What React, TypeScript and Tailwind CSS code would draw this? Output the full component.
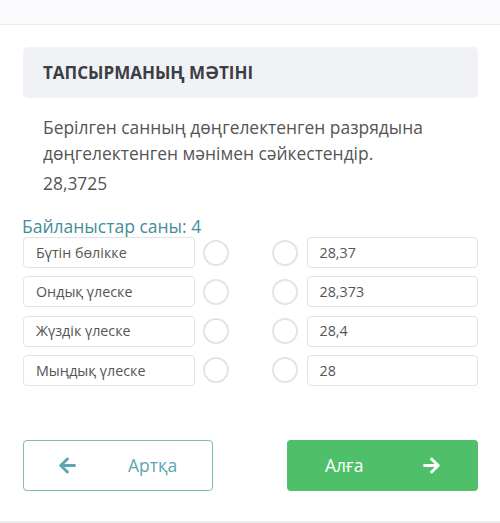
import React from "react";
import { FaArrowLeft, FaArrowRight } from "react-icons/fa";

const left = ["Бүтін бөлікке", "Ондық үлеске", "Жүздік үлеске", "Мыңдық үлеске"];
const right = ["28,37", "28,373", "28,4", "28"];

function Circle() {
  return <div className="w-[26px] h-[26px] rounded-full border-2 border-[#e4e4e4] bg-white shrink-0" />;
}

export default function App() {
  return (
    <div className="w-[500px] h-[523px] bg-white overflow-hidden relative" style={{ fontFamily: '"Open Sans", sans-serif' }}>
      <div className="h-[25px] bg-[#fafafc] border-b border-[#e9e9ec]" />
      <div className="px-[22px] pl-[23px]">
        <div className="mt-[22px] h-[51px] rounded-[5px] bg-[#f1f2f6] flex items-center pl-[20px]">
          <span className="text-[17px] font-bold text-[#3b3e45]">ТАПСЫРМАНЫҢ МӘТІНІ</span>
        </div>
        <div className="pl-[20px] mt-[16px] text-[17.4px] leading-[26px] text-[#555]">
          <p>Берілген санның дөңгелектенген разрядына дөңгелектенген мәнімен сәйкестендір.</p>
          <p className="mt-[4px]">28,3725</p>
        </div>
        <div className="-ml-[1px] mt-[18px] text-[17.5px] leading-[24px] text-[#3f8e9c]">Байланыстар саны: 4</div>
        <div className="mt-[-1px] flex flex-col gap-[8.3px]">
          {left.map((l, i) => (
            <div key={i} className="flex items-center h-[31px]">
              <div className="w-[172px] h-[31px] border border-[#e3e3e3] rounded-[4px] flex items-center pl-[12px] text-[14.3px] text-[#555]">{l}</div>
              <div className="ml-[8px]"><Circle /></div>
              <div className="ml-[43px]"><Circle /></div>
              <div className="ml-[9px] w-[172px] h-[31px] border border-[#e3e3e3] rounded-[4px] flex items-center pl-[12px] text-[14.3px] text-[#555]">{right[i]}</div>
            </div>
          ))}
        </div>
        <div className="mt-[54px] flex justify-between">
          <div className="w-[190px] h-[51px] border border-[#7fb8c0] rounded-[4px] flex items-center text-[#5aa7b2]">
            <FaArrowLeft className="ml-[34px] w-[19px] h-[19px]" />
            <span className="ml-[51px] text-[17.5px]">Артқа</span>
          </div>
          <div className="w-[191px] h-[51px] rounded-[4px] bg-[#4fbf6a] flex items-center text-white">
            <span className="ml-[38px] text-[17.5px]">Алға</span>
            <FaArrowRight className="ml-[59px] w-[19px] h-[19px]" />
          </div>
        </div>
      </div>
      <div className="absolute bottom-0 left-0 right-0 h-[2px] bg-[#eeeeee]" />
    </div>
  );
}
